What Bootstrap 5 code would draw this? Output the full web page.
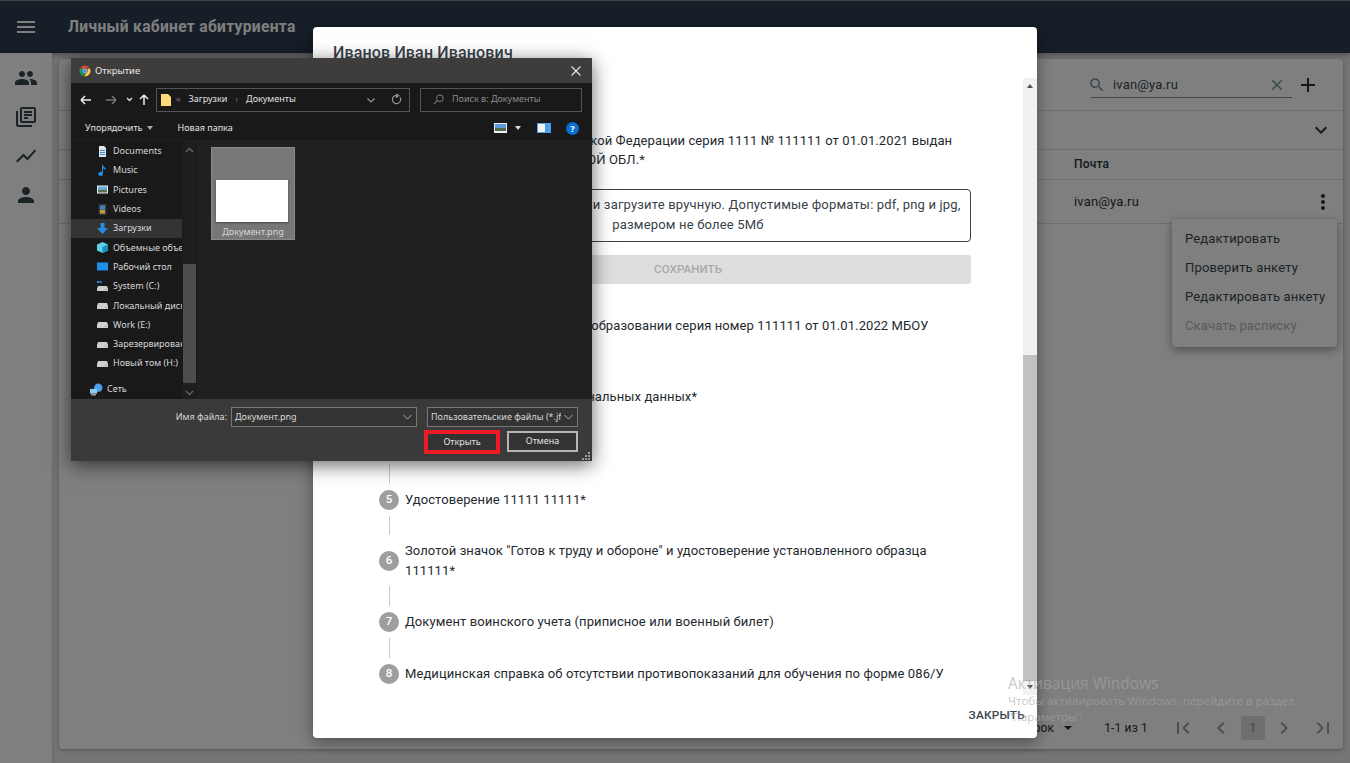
<!DOCTYPE html>
<html lang="ru">
<head>
<meta charset="utf-8">
<title>Личный кабинет абитуриента</title>
<link href="https://cdn.jsdelivr.net/npm/bootstrap@5.3.0/dist/css/bootstrap.min.css" rel="stylesheet">
<style>
html,body{height:763px;overflow:hidden;margin:0}
body{font-family:Roboto,"Liberation Sans",sans-serif;font-size:13px;letter-spacing:.012em;color:#263238;background:#eaeaea}
svg{display:block;flex:none}
.shell{height:763px;position:relative;overflow:hidden}
.topbar{height:53px;background:#2c3c50;border-top:1px solid #8a8a8a;box-shadow:0 2px 5px rgba(0,0,0,.35);padding-left:14px;gap:30px;color:#fff}
.topbar svg{fill:#fff;width:24px;height:24px}
.brand{font-size:15.6px;font-weight:700;letter-spacing:.02em;padding-top:2px}
.rail{width:52px;background:#fff;box-shadow:1px 0 4px rgba(0,0,0,.12);padding-top:13px;gap:15px;height:710px}
.rail svg{fill:#37474f;width:24px;height:24px}
.sheet{width:1284px;height:690px;margin:6px 0 0 7px;background:#fff;border-radius:4px;box-shadow:0 1px 4px rgba(0,0,0,.3)}
.tools{height:51px;padding-right:23px}
.seek{width:201px;height:26px;margin-right:4px;margin-bottom:-1px;border-bottom:1px solid #78909c;padding:0 6px 0 0;color:#37474f}
.seek svg{width:18px;height:18px;fill:#78909c}
.seek .lens{margin:0 7px 0 -3px}
.tools>svg{width:24px;height:24px;fill:#263238}
.rowline{border-top:1px solid #ddd}
.filterline{height:39px;padding-right:10px}
.filterline svg{width:24px;height:24px;fill:#263238}
.headline{height:30px;padding:0 0 2px 1015px;font-weight:500;font-size:12px}
.dataline{height:45px;padding-left:1015px;padding-right:8px;border-bottom:1px solid #ddd}
.dataline svg{width:24px;height:24px;fill:#263238}
.tablefoot{margin-top:auto;padding-bottom:9px;padding-right:8px;font-size:12px}
.tablefoot svg{width:24px;height:24px;fill:#9e9e9e}
.pgbtn{width:24px;height:24px;background:#ddd;border-radius:3px;color:#888;font-size:12px;margin:0 7px 0 8px}
.pgfirst{margin-right:14px}
.pgnext{margin-right:15px}
.caret-down{width:0;height:0;border-left:4px solid transparent;border-right:4px solid transparent;border-top:4px solid #263238;margin-left:10px}
.rangetext{margin:0 23px 0 32px}
.ctx{position:absolute;left:1172px;top:219px;width:165px;height:128px;background:#fff;border-radius:4px;box-shadow:0 3px 10px rgba(0,0,0,.4);padding:5px 0 6px 13px;color:#37474f}
.ctx div{height:29px;line-height:29px}
.ctx .off{color:#b0b5b8}
.dim{position:absolute;inset:0;background:rgba(0,0,0,.5)}
.sheetmodal{position:absolute;left:313px;top:27px;width:724px;height:711px;background:#fff;border-radius:4px;box-shadow:0 4px 16px rgba(0,0,0,.4)}
.mtitle{height:51px;padding:16px 0 0 20px;font-size:16px;font-weight:500;color:#37424a;line-height:20px;letter-spacing:.01em}
.mscroll{height:617px}
.mbody{padding:52.5px 52px 0 66px;line-height:19.5px;color:#1f2a30;width:710px;letter-spacing:.007em}
.mtrack{width:14px;background:#f1f1f1;position:relative;padding-top:277px}
.mthumb{height:326px;background:#c1c1c1}
.arrowup,.arrowdn{width:0;height:0;border-left:3px solid transparent;border-right:3px solid transparent;position:absolute;left:4px}
.arrowup{top:6px;border-bottom:4px solid #505050}
.arrowdn{bottom:6px;border-top:4px solid #505050}
.stepline{gap:6px}
.stepdot{width:20px;height:20px;border-radius:50%;background:#9e9e9e;color:#fff;font-size:11.5px;font-weight:500;flex:none;letter-spacing:0}
.stepjoin{width:1px;height:19.6px;background:#c8c8c8;margin:6px 0 6px 10px}
.stepjoin.tall{margin-top:6.5px;height:19.5px}
.dropzone{margin:19.5px 0 13px 26px;height:53px;border:1px solid #37424a;border-radius:4px;text-align:center;padding:5px 4px 0;line-height:20px;color:#37424a;letter-spacing:.014em}
.savebtn{margin-left:26px;height:29px;border-radius:3px;background:#dedede;color:#a9a9a9;font-weight:500;font-size:11.5px}
.mfoot{height:41px;padding-right:12px;font-weight:500;color:#37474f;font-size:11.8px;letter-spacing:.02em}
.filewin{position:absolute;left:71px;top:58px;width:521px;height:403px;background:#202020;box-shadow:0 4px 18px rgba(0,0,0,.6);font-family:"Noto Sans","Open Sans",sans-serif;font-size:9px;color:#d8d8d8;letter-spacing:0;overflow:hidden;line-height:12px}
.wintitle{height:25px;background:#3f3d3b;padding:0 11px 0 8px;gap:4px;color:#e8e8e8;font-size:9.5px}
.addr{height:33px;background:#191919;padding:0 10px 0 9px}
.addr svg{fill:none}
.gofwd{margin-left:13px}
.godown{margin-left:9px}
.goup{margin-left:5px}
.crumbs{width:254px;height:24px;border:1px solid #555;margin-left:6px;background:#191919;padding-left:4px;color:#e0e0e0}
.crumbs span,.finder span{margin-top:-2px}
.crumbmark{color:#777}
.crumbmark.first{margin:-2px 8px 0 4px}
.crumbmark.sep{margin:-2px 8px 0}
.crumbdrop{margin-right:16px}
.crumbreload{margin-right:7px}
.finder{width:162px;height:24px;margin-left:10px;border:1px solid #555;padding-left:12px;color:#8c8c8c;gap:8px}
.cmdbar{height:25px;background:#191919;padding:0 13px 0 14px;color:#e4e4e4;border-bottom:1px solid #222}
.tri{width:0;height:0;border-left:3.5px solid transparent;border-right:3.5px solid transparent;border-top:4px solid #aaa;margin-left:4px}
.tri.lite{border-top-color:#ddd;margin-left:8px}
.newfolder{margin-left:25px}
.panebtn{margin-left:16px}
.helpbtn{margin-left:15px}
.winmid{height:258px}
.tree{width:126px;background:#191919}
.treelist{width:111px;overflow:hidden;padding-top:.5px}
.treeitem{height:19.3px;padding-left:26px;gap:5px;white-space:nowrap;color:#d8d8d8}
.treeitem.on{background:#333}
.treeitem.net{padding-left:19px;margin-top:6.5px;gap:4px}
.ticon{width:11px;height:11px}
.ticon.wide{width:13px;height:13px}
.treebar{width:13px;margin-left:1px;background:#1e1e1e;padding-top:5px}
.treebar svg{margin:0 auto}
.treethumb{height:119px;background:#4d4d4d;margin:110px 0 6px}
.pane{padding:6px 0 0 14px}
.thumbcell{width:84px;height:93px;background:#777;border:1px solid #8a8a8a;padding-top:32px;text-align:center}
.thumbimg{width:72px;height:42px;background:#fff;margin:0 0 4px 4px;box-shadow:0 1px 2px rgba(0,0,0,.4)}
.winbottom{height:62px;background:#3a3a3a;padding:8px 14px 0 0;position:relative}
.nameinput{width:186px;height:20px;background:#333;border:1px solid #777;margin-left:4px;padding:0 4px 0 3px}
.typeinput{width:151px;height:20px;background:#333;border:1px solid #777;margin-left:10px;padding:0 4px 0 3px;white-space:nowrap;overflow:hidden}
.winbuttons{margin-top:3px;gap:7px}
.okbtn{width:76px;height:24px;border:4px solid #ed1c24;background:#333;color:#e4e4e4}
.nobtn{width:71px;height:21px;border:2px solid #b5b5b5;background:#333;color:#e4e4e4;margin-bottom:2px}
.grip{position:absolute;right:2px;bottom:1px}
.watermark{position:absolute;left:1008px;top:673px;color:rgba(165,165,165,.65);font-family:"Open Sans",sans-serif;font-size:11.5px;line-height:16px;width:330px;letter-spacing:0}
.watermark div:first-child{font-size:15.5px;line-height:20px}
</style>
</head>
<body>
<div class="shell">
  <header class="topbar d-flex align-items-center">
    <svg viewBox="0 0 24 24"><path d="M3 18h18v-2H3v2zm0-5h18v-2H3v2zm0-7v2h18V6H3z"/></svg>
    <div class="brand">Личный кабинет абитуриента</div>
  </header>
  <div class="d-flex">
    <nav class="rail d-flex flex-column align-items-center">
      <svg viewBox="0 0 24 24"><path d="M16 11c1.66 0 2.99-1.34 2.99-3S17.66 5 16 5c-1.66 0-3 1.34-3 3s1.34 3 3 3zm-8 0c1.66 0 2.99-1.34 2.99-3S9.66 5 8 5C6.34 5 5 6.34 5 8s1.34 3 3 3zm0 2c-2.33 0-7 1.17-7 3.5V19h14v-2.5c0-2.33-4.67-3.5-7-3.5zm8 0c-.29 0-.62.02-.97.05 1.16.84 1.97 1.97 1.97 3.45V19h6v-2.5c0-2.33-4.67-3.5-7-3.5z"/></svg>
      <svg viewBox="0 0 24 24"><path d="M4 6H2v14c0 1.1.9 2 2 2h14v-2H4V6zm16-4H8c-1.1 0-2 .9-2 2v12c0 1.1.9 2 2 2h12c1.1 0 2-.9 2-2V4c0-1.1-.9-2-2-2zm0 14H8V4h12v12zM10 9h8v2h-8zm0 3h4v2h-4zm0-6h8v2h-8z"/></svg>
      <svg viewBox="0 0 24 24"><path d="M3.5 18.49l6-6.01 4 4L22 6.92l-1.41-1.41-7.09 7.97-4-4L2 16.99z"/></svg>
      <svg viewBox="0 0 24 24"><path d="M12 12c2.21 0 4-1.79 4-4s-1.79-4-4-4-4 1.79-4 4 1.79 4 4 4zm0 2c-2.67 0-8 1.34-8 4v2h16v-2c0-2.66-5.33-4-8-4z"/></svg>
    </nav>
    <main class="sheet d-flex flex-column">
      <div class="tools d-flex align-items-center justify-content-end">
        <div class="seek d-flex align-items-center">
          <svg class="lens" viewBox="0 0 24 24"><path d="M15.5 14h-.79l-.28-.27C15.41 12.59 16 11.11 16 9.5 16 5.91 13.09 3 9.5 3S3 5.91 3 9.5 5.91 16 9.5 16c1.61 0 3.09-.59 4.23-1.57l.27.28v.79l5 4.99L20.49 19l-4.99-5zm-6 0C7.01 14 5 11.99 5 9.5S7.01 5 9.5 5 14 7.01 14 9.5 11.99 14 9.5 14z"/></svg>
          <span class="flex-grow-1">ivan@ya.ru</span>
          <svg viewBox="0 0 24 24"><path d="M19 6.41L17.59 5 12 10.59 6.41 5 5 6.41 10.59 12 5 17.59 6.41 19 12 13.41 17.59 19 19 17.59 13.41 12z"/></svg>
        </div>
        <svg viewBox="0 0 24 24"><path d="M19 13h-6v6h-2v-6H5v-2h6V5h2v6h6v2z"/></svg>
      </div>
      <div class="filterline rowline d-flex align-items-center justify-content-end">
        <svg viewBox="0 0 24 24"><path d="M16.59 8.59L12 13.17 7.41 8.59 6 10l6 6 6-6z"/></svg>
      </div>
      <div class="headline rowline d-flex align-items-center">Почта</div>
      <div class="dataline rowline d-flex align-items-center justify-content-between">
        <span>ivan@ya.ru</span>
        <svg viewBox="0 0 24 24"><path d="M12 8c1.1 0 2-.9 2-2s-.9-2-2-2-2 .9-2 2 .9 2 2 2zm0 2c-1.1 0-2 .9-2 2s.9 2 2 2 2-.9 2-2-.9-2-2-2zm0 6c-1.1 0-2 .9-2 2s.9 2 2 2 2-.9 2-2-.9-2-2-2z"/></svg>
      </div>
      <div class="tablefoot d-flex align-items-center justify-content-end">
        <span>10 строк</span>
        <span class="caret-down"></span>
        <span class="rangetext">1-1 из 1</span>
        <svg class="pgfirst" viewBox="0 0 24 24"><path d="M18.41 16.59L13.82 12l4.59-4.59L17 6l-6 6 6 6zM6 6h2v12H6z"/></svg>
        <svg viewBox="0 0 24 24"><path d="M15.41 7.41L14 6l-6 6 6 6 1.41-1.41L10.83 12z"/></svg>
        <div class="pgbtn d-flex align-items-center justify-content-center">1</div>
        <svg class="pgnext" viewBox="0 0 24 24"><path d="M10 6L8.59 7.41 13.17 12l-4.58 4.59L10 18l6-6z"/></svg>
        <svg viewBox="0 0 24 24"><path d="M5.59 7.41L10.18 12l-4.59 4.59L7 18l6-6-6-6zM16 6h2v12h-2z"/></svg>
      </div>
    </main>
  </div>
  <div class="ctx">
    <div>Редактировать</div>
    <div>Проверить анкету</div>
    <div>Редактировать анкету</div>
    <div class="off">Скачать расписку</div>
  </div>

  <div class="dim"></div>

  <section class="sheetmodal d-flex flex-column">
    <div class="mtitle">Иванов Иван Иванович</div>
    <div class="mscroll d-flex justify-content-between">
      <div class="mbody">
        <div class="stepline d-flex align-items-center"><span class="stepdot d-flex align-items-center justify-content-center">1</span><span>Паспорт гражданина Российской Федерации серия 1111 № 111111 от 01.01.2021 выдан МВД РОССИИ ПО МОСКОВСКОЙ ОБЛ.*</span></div>
        <div class="dropzone">Перетащите файлы сюда или загрузите вручную. Допустимые форматы: pdf, png и jpg, размером не более 5Мб</div>
        <div class="savebtn d-flex align-items-center justify-content-center">СОХРАНИТЬ</div>
        <div class="stepjoin tall"></div>
        <div class="stepline d-flex align-items-center"><span class="stepdot d-flex align-items-center justify-content-center">2</span><span>Аттестат об основном общем образовании серия номер 111111 от 01.01.2022 МБОУ СОШ&nbsp;№&nbsp;1*</span></div>
        <div class="stepjoin"></div>
        <div class="stepline d-flex align-items-center"><span class="stepdot d-flex align-items-center justify-content-center">3</span><span>Согласие на обработку персональных данных*</span></div>
        <div class="stepjoin"></div>
        <div class="stepline d-flex align-items-center"><span class="stepdot d-flex align-items-center justify-content-center">4</span><span>СНИЛС*</span></div>
        <div class="stepjoin"></div>
        <div class="stepline d-flex align-items-center"><span class="stepdot d-flex align-items-center justify-content-center">5</span><span>Удостоверение 11111 11111*</span></div>
        <div class="stepjoin"></div>
        <div class="stepline d-flex align-items-center"><span class="stepdot d-flex align-items-center justify-content-center">6</span><span>Золотой значок "Готов к труду и обороне" и удостоверение установленного образца 111111*</span></div>
        <div class="stepjoin"></div>
        <div class="stepline d-flex align-items-center"><span class="stepdot d-flex align-items-center justify-content-center">7</span><span>Документ воинского учета (приписное или военный билет)</span></div>
        <div class="stepjoin"></div>
        <div class="stepline d-flex align-items-center"><span class="stepdot d-flex align-items-center justify-content-center">8</span><span>Медицинская справка об отсутствии противопоказаний для обучения по форме 086/У</span></div>
      </div>
      <div class="mtrack"><span class="arrowup"></span><div class="mthumb"></div><span class="arrowdn"></span></div>
    </div>
    <div class="mfoot d-flex align-items-center justify-content-end">ЗАКРЫТЬ</div>
  </section>

  <section class="filewin d-flex flex-column">
    <div class="wintitle d-flex align-items-center">
      <svg width="12" height="12" viewBox="0 0 24 24"><path fill="#db4437" d="M12 1a11 11 0 0 1 9.5 5.5H12a5.5 5.5 0 0 0-5 3.2L3.200 5.200A11 11 0 0 1 12 1z"/><path fill="#0f9d58" d="M3.200 5.200 7 9.700a5.500 5.500 0 0 0 4 7.700L8.200 22.300A11 11 0 0 1 3.200 5.200z"/><path fill="#ffcd40" d="M21.500 6.500a11 11 0 0 1-11 16.400l3-5.500a5.500 5.500 0 0 0 3-8.500z"/><circle cx="12" cy="12" r="4.300" fill="#4285f4" stroke="#fff" stroke-width="1"/></svg>
      <span class="flex-grow-1">Открытие</span>
      <svg width="10" height="10" viewBox="0 0 10 10"><path d="M.5.500l9 9m0-9l-9 9" stroke="#e8e8e8" stroke-width="1.100"/></svg>
    </div>
    <div class="addr d-flex align-items-center">
      <svg width="12" height="12" viewBox="0 0 12 12"><path d="M1 6h10M1 6l4-4M1 6l4 4" stroke="#eee" stroke-width="1.500"/></svg>
      <svg class="gofwd" width="12" height="12" viewBox="0 0 12 12"><path d="M11 6H1M11 6 7 2M11 6l-4 4" stroke="#777" stroke-width="1.500"/></svg>
      <svg class="godown" width="7" height="7" viewBox="0 0 7 7"><path d="M1 2l2.500 2.500L6 2" stroke="#ddd" stroke-width="1.300"/></svg>
      <svg class="goup" width="12" height="12" viewBox="0 0 12 12"><path d="M6 11V1M6 1 2 5M6 1l4 4" stroke="#eee" stroke-width="1.500"/></svg>
      <div class="crumbs d-flex align-items-center">
        <svg width="11" height="14" viewBox="0 0 11 14"><path d="M0 1h7l3 3v9H0z" fill="#ffd97a"/></svg>
        <span class="crumbmark first">«</span><span>Загрузки</span><span class="crumbmark sep">›</span><span class="flex-grow-1">Документы</span>
        <svg class="crumbdrop" width="8" height="8" viewBox="0 0 8 8"><path d="M.5 2.500 4 6l3.500-3.500" stroke="#999" stroke-width="1.200"/></svg>
        <svg class="crumbreload" width="11" height="11" viewBox="0 0 12 12"><path d="M9.800 3.500A4.500 4.500 0 1 1 6 1.500M6 0v3.500l2.500-1.700z" stroke="#999" stroke-width="1.200"/></svg>
      </div>
      <div class="finder d-flex align-items-center">
        <svg width="11" height="11" viewBox="0 0 12 12"><circle cx="7.500" cy="4.500" r="3.500" stroke="#777" stroke-width="1.100"/><path d="M5 7 1 11" stroke="#777" stroke-width="1.300"/></svg>
        <span>Поиск в: Документы</span>
      </div>
    </div>
    <div class="cmdbar d-flex align-items-center">
      <span>Упорядочить</span><span class="tri"></span>
      <span class="flex-grow-1 newfolder">Новая папка</span>
      <svg width="13" height="10" viewBox="0 0 13 10"><rect width="13" height="10" fill="#e8eef2"/><rect x="1" y="1" width="11" height="4" fill="#5b9bd5"/><rect x="1" y="5" width="11" height="3" fill="#4d6b4a"/></svg>
      <span class="tri lite"></span>
      <svg class="panebtn" width="14" height="10" viewBox="0 0 14 10"><rect width="14" height="10" fill="#4ea1ef"/><rect x="1" y="1" width="7" height="8" fill="#f2f2f2"/></svg>
      <svg class="helpbtn" width="13" height="13" viewBox="0 0 13 13"><circle cx="6.500" cy="6.500" r="6.500" fill="#0a6fd0"/><text x="6.500" y="10" text-anchor="middle" font-size="9.500" font-weight="700" fill="#fff">?</text></svg>
    </div>
    <div class="winmid d-flex">
      <div class="tree d-flex">
        <div class="treelist">
          <div class="treeitem d-flex align-items-center"><svg class="ticon" viewBox="0 0 11 11"><path d="M2 0h5l2 2v9H2z" fill="#dfe6ec"/><path d="M3 4h5v1H3zM3 6h5v1H3zM3 8h5v1H3z" fill="#3c87c8"/></svg>Documents</div>
          <div class="treeitem d-flex align-items-center"><svg class="ticon" viewBox="0 0 11 11"><path d="M5 0h1c0 2 3 2 3 5-1-1-2-1.500-3-1.500V9a2.300 2 0 1 1-1-1.700z" fill="#1e90e8"/></svg>Music</div>
          <div class="treeitem d-flex align-items-center"><svg class="ticon" viewBox="0 0 11 11"><rect y="1.500" width="11" height="8" fill="#e8eef2"/><rect x="1" y="2.500" width="9" height="3.500" fill="#6aa8d8"/><rect x="1" y="6" width="9" height="2.500" fill="#56704c"/></svg>Pictures</div>
          <div class="treeitem d-flex align-items-center"><svg class="ticon" viewBox="0 0 11 11"><rect x="1.500" width="8" height="11" fill="#3a3a3a"/><rect x="3" y="1.500" width="5" height="4" fill="#3c87c8"/><rect x="3" y="6" width="5" height="3.500" fill="#c79a3c"/></svg>Videos</div>
          <div class="treeitem on d-flex align-items-center"><svg class="ticon" viewBox="0 0 11 11"><path d="M3.500 0h4v5H11L5.500 11 0 5h3.500z" fill="#2c8be0"/></svg>Загрузки</div>
          <div class="treeitem d-flex align-items-center"><svg class="ticon" viewBox="0 0 11 11"><path d="M5.500 0 11 2.500v6L5.500 11 0 8.500v-6z" fill="#5ed0e8"/><path d="M5.500 5 11 2.500v6L5.500 11z" fill="#1b8fc0"/></svg>Объемные объекты</div>
          <div class="treeitem d-flex align-items-center"><svg class="ticon" viewBox="0 0 11 11"><rect y="1.500" width="11" height="8" fill="#1e90e8"/></svg>Рабочий стол</div>
          <div class="treeitem d-flex align-items-center"><svg class="ticon" viewBox="0 0 11 11"><path d="M0 0h2v2H0zM2.500 0h2v2h-2z" fill="#2c8be0"/><path d="M1 5h9l1 3v2H0V8z" fill="#cfcfcf"/><rect x="8" y="8" width="1.500" height="1" fill="#5cc04c"/></svg>System (C:)</div>
          <div class="treeitem d-flex align-items-center"><svg class="ticon" viewBox="0 0 11 11"><path d="M1 3h9l1 3v3H0V6z" fill="#cfcfcf"/><rect x="8" y="7" width="1.500" height="1" fill="#5cc04c"/></svg>Локальный диск (D:)</div>
          <div class="treeitem d-flex align-items-center"><svg class="ticon" viewBox="0 0 11 11"><path d="M1 3h9l1 3v3H0V6z" fill="#cfcfcf"/><rect x="8" y="7" width="1.500" height="1" fill="#5cc04c"/></svg>Work (E:)</div>
          <div class="treeitem d-flex align-items-center"><svg class="ticon" viewBox="0 0 11 11"><path d="M1 3h9l1 3v3H0V6z" fill="#cfcfcf"/><rect x="8" y="7" width="1.500" height="1" fill="#5cc04c"/></svg>Зарезервировано системой</div>
          <div class="treeitem d-flex align-items-center"><svg class="ticon" viewBox="0 0 11 11"><path d="M1 3h9l1 3v3H0V6z" fill="#cfcfcf"/><rect x="8" y="7" width="1.500" height="1" fill="#5cc04c"/></svg>Новый том (H:)</div>
          <div class="treeitem net d-flex align-items-center"><svg class="ticon wide" viewBox="0 0 11 11"><circle cx="7" cy="4" r="3.500" fill="#4ea1ef"/><rect x="0" y="5" width="6" height="4" fill="#8ccbf0"/><rect x="1" y="9.500" width="4" height="1" fill="#ccc"/></svg>Сеть</div>
        </div>
        <div class="treebar">
          <svg width="9" height="8" viewBox="0 0 9 8"><path d="M1 6l3.500-3.500L8 6" stroke="#666" stroke-width="1.400" fill="none"/></svg>
          <div class="treethumb"></div>
          <svg width="9" height="8" viewBox="0 0 9 8"><path d="M1 2l3.500 3.500L8 2" stroke="#666" stroke-width="1.400" fill="none"/></svg>
        </div>
      </div>
      <div class="pane flex-grow-1">
        <div class="thumbcell"><div class="thumbimg"></div>Документ.png</div>
      </div>
    </div>
    <div class="winbottom">
      <div class="d-flex align-items-center justify-content-end">
        <span>Имя файла:</span>
        <div class="nameinput d-flex align-items-center justify-content-between">
          <span>Документ.png</span>
          <svg width="9" height="8" viewBox="0 0 9 8"><path d="M.5 2 4.500 6l4-4" stroke="#aaa" fill="none"/></svg>
        </div>
        <div class="typeinput d-flex align-items-center justify-content-between">
          <span class="overflow-hidden">Пользовательские файлы (*.jf</span>
          <svg width="9" height="8" viewBox="0 0 9 8"><path d="M.5 2 4.500 6l4-4" stroke="#aaa" fill="none"/></svg>
        </div>
      </div>
      <div class="winbuttons d-flex align-items-center justify-content-end">
        <div class="okbtn d-flex align-items-center justify-content-center">Открыть</div>
        <div class="nobtn d-flex align-items-center justify-content-center">Отмена</div>
      </div>
      <svg class="grip" width="8" height="8" viewBox="0 0 8 8"><path d="M6 0h2v2H6zM3 3h2v2H3zM6 3h2v2H6zM0 6h2v2H0zM3 6h2v2H3zM6 6h2v2H6z" fill="#999"/></svg>
    </div>
  </section>

  <aside class="watermark">
    <div>Активация Windows</div>
    <div>Чтобы активировать Windows, перейдите в раздел</div>
    <div>"Параметры".</div>
  </aside>
</div>
<script src="https://cdn.jsdelivr.net/npm/bootstrap@5.3.0/dist/js/bootstrap.bundle.min.js"></script>
</body>
</html>
